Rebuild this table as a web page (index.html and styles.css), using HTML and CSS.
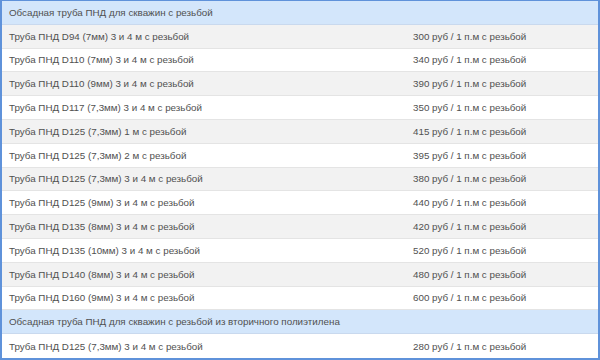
FILE: index.html
```html
<!DOCTYPE html>
<html>
<head>
<meta charset="utf-8">
<link rel="stylesheet" href="styles.css">
</head>
<body>
<div class="table">
  <div class="row head"><div class="c1">Обсадная труба ПНД для скважин с резьбой</div><div class="c2"></div></div>
  <div class="row odd"><div class="c1">Труба ПНД D94 (7мм) 3 и 4 м с резьбой</div><div class="c2">300 руб / 1 п.м с резьбой</div></div>
  <div class="row"><div class="c1">Труба ПНД D110 (7мм) 3 и 4 м с резьбой</div><div class="c2">340 руб / 1 п.м с резьбой</div></div>
  <div class="row odd"><div class="c1">Труба ПНД D110 (9мм) 3 и 4 м с резьбой</div><div class="c2">390 руб / 1 п.м с резьбой</div></div>
  <div class="row"><div class="c1">Труба ПНД D117 (7,3мм) 3 и 4 м с резьбой</div><div class="c2">350 руб / 1 п.м с резьбой</div></div>
  <div class="row odd"><div class="c1">Труба ПНД D125 (7,3мм) 1 м с резьбой</div><div class="c2">415 руб / 1 п.м с резьбой</div></div>
  <div class="row"><div class="c1">Труба ПНД D125 (7,3мм) 2 м с резьбой</div><div class="c2">395 руб / 1 п.м с резьбой</div></div>
  <div class="row odd"><div class="c1">Труба ПНД D125 (7,3мм) 3 и 4 м с резьбой</div><div class="c2">380 руб / 1 п.м с резьбой</div></div>
  <div class="row"><div class="c1">Труба ПНД D125 (9мм) 3 и 4 м с резьбой</div><div class="c2">440 руб / 1 п.м с резьбой</div></div>
  <div class="row odd"><div class="c1">Труба ПНД D135 (8мм) 3 и 4 м с резьбой</div><div class="c2">420 руб / 1 п.м с резьбой</div></div>
  <div class="row"><div class="c1">Труба ПНД D135 (10мм) 3 и 4 м с резьбой</div><div class="c2">520 руб / 1 п.м с резьбой</div></div>
  <div class="row odd"><div class="c1">Труба ПНД D140 (8мм) 3 и 4 м с резьбой</div><div class="c2">480 руб / 1 п.м с резьбой</div></div>
  <div class="row"><div class="c1">Труба ПНД D160 (9мм) 3 и 4 м с резьбой</div><div class="c2">600 руб / 1 п.м с резьбой</div></div>
  <div class="row head"><div class="c1 wide">Обсадная труба ПНД для скважин с резьбой из вторичного полиэтилена</div></div>
  <div class="row"><div class="c1">Труба ПНД D125 (7,3мм) 3 и 4 м с резьбой</div><div class="c2">280 руб / 1 п.м с резьбой</div></div>
</div>
</body>
</html>
```
FILE: styles.css
```css
html, body {
  margin: 0;
  padding: 0;
  background: #fff;
}
.table {
  box-sizing: border-box;
  width: 600px;
  height: 360px;
  border: 2px solid #5f92da;
  border-top-width: 1px;
  display: grid;
  grid-template-rows: repeat(15, 1fr);
  font-family: "Liberation Sans", Arial, sans-serif;
  font-size: 9.8px;
  color: #505050;
}
.row {
  display: grid;
  grid-template-columns: 411px 1fr;
  align-items: center;
  background: #fff;
  border-bottom: 1px solid #e4e4e4;
}
.row:last-child {
  border-bottom: none;
}
.row.odd {
  background: #f2f2f2;
}
.row.head {
  background: #d3e6fb;
  border-bottom-color: #c9d9ee;
}
.c1 {
  padding-left: 7px;
  white-space: nowrap;
}
.c1.wide {
  grid-column: 1 / 3;
}
.c2 {
  white-space: nowrap;
}
```
